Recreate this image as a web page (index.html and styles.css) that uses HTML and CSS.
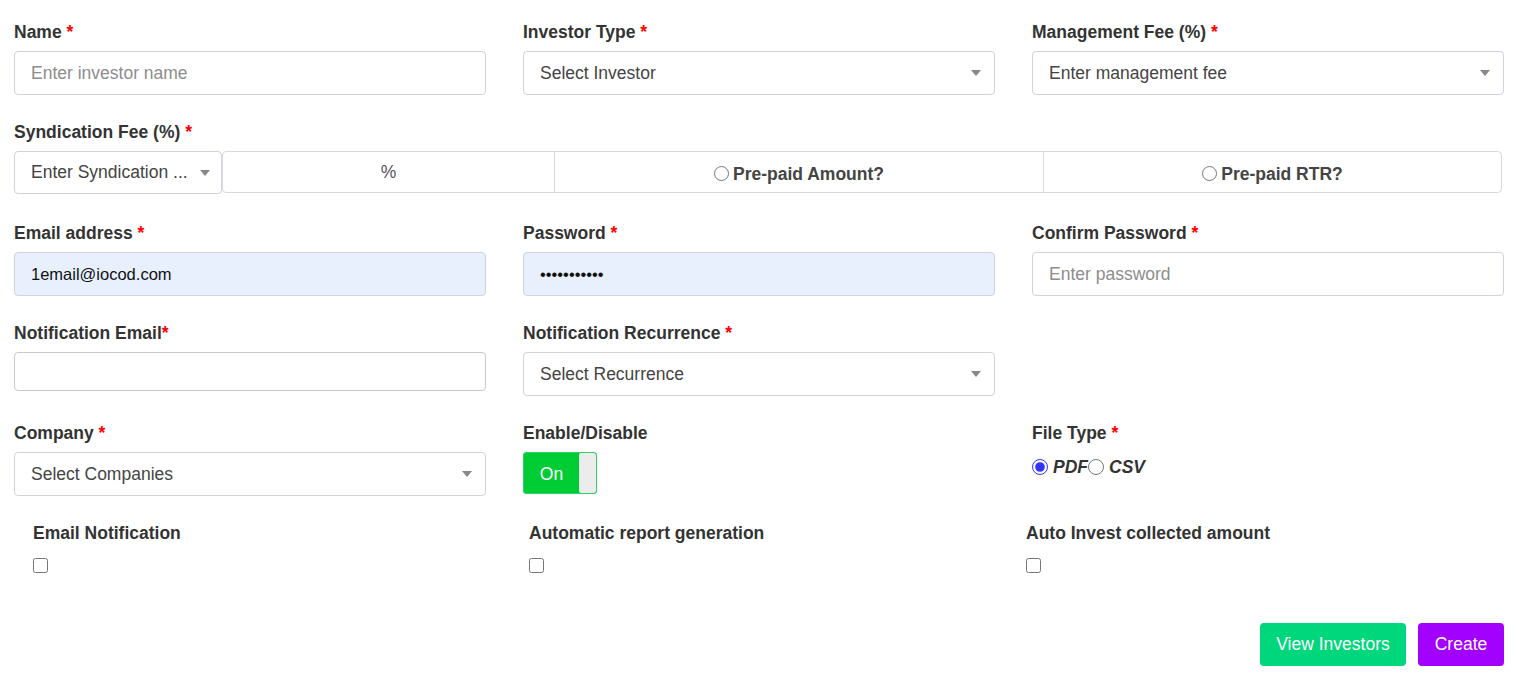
FILE: index.html
```html
<!DOCTYPE html>
<html lang="en">
<head>
<meta charset="utf-8">
<title>Create Investor</title>
<link rel="stylesheet" href="styles.css">
</head>
<body>
<form class="form">
  <div class="row3">
    <div class="field">
      <label class="lbl">Name <span class="req">*</span></label>
      <input class="inp" type="text" placeholder="Enter investor name">
    </div>
    <div class="field">
      <label class="lbl">Investor Type <span class="req">*</span></label>
      <div class="sel"><span>Select Investor</span><i class="caret"></i></div>
    </div>
    <div class="field">
      <label class="lbl">Management Fee (%) <span class="req">*</span></label>
      <div class="sel"><span>Enter management fee</span><i class="caret"></i></div>
    </div>
  </div>

  <div class="field synd-field">
    <label class="lbl">Syndication Fee (%) <span class="req">*</span></label>
    <div class="synd">
      <div class="sel sel-small"><span class="ell">Enter Syndication ...</span><i class="caret"></i></div>
      <div class="group">
        <div class="cell cell-pct">%</div>
        <div class="cell cell-amt"><input type="radio" class="rad"><span>Pre-paid Amount?</span></div>
        <div class="cell cell-rtr"><input type="radio" class="rad"><span>Pre-paid RTR?</span></div>
      </div>
    </div>
  </div>

  <div class="row3">
    <div class="field">
      <label class="lbl">Email address <span class="req">*</span></label>
      <input class="inp filled" type="text" value="1email@iocod.com">
    </div>
    <div class="field">
      <label class="lbl">Password <span class="req">*</span></label>
      <input class="inp filled pw" type="password" value="12345678901">
    </div>
    <div class="field">
      <label class="lbl">Confirm Password <span class="req">*</span></label>
      <input class="inp" type="password" placeholder="Enter password">
    </div>
  </div>

  <div class="row3">
    <div class="field">
      <label class="lbl">Notification Email<span class="req">*</span></label>
      <input class="inp inp-short" type="text">
    </div>
    <div class="field">
      <label class="lbl">Notification Recurrence <span class="req">*</span></label>
      <div class="sel"><span>Select Recurrence</span><i class="caret"></i></div>
    </div>
    <div></div>
  </div>

  <div class="row3">
    <div class="field">
      <label class="lbl">Company <span class="req">*</span></label>
      <div class="sel"><span>Select Companies</span><i class="caret"></i></div>
    </div>
    <div class="field">
      <label class="lbl">Enable/Disable</label>
      <div class="toggle"><span class="on">On</span><span class="knob"></span></div>
    </div>
    <div class="field">
      <label class="lbl">File Type <span class="req">*</span></label>
      <div class="ftype">
        <input type="radio" name="ft" class="rad2" checked><span class="it">PDF</span><input type="radio" name="ft" class="rad2"><span class="it">CSV</span>
      </div>
    </div>
  </div>

  <div class="checks">
    <div class="chk">
      <label class="lbl">Email Notification</label>
      <input type="checkbox" class="cb">
    </div>
    <div class="chk">
      <label class="lbl">Automatic report generation</label>
      <input type="checkbox" class="cb">
    </div>
    <div class="chk">
      <label class="lbl">Auto Invest collected amount</label>
      <input type="checkbox" class="cb">
    </div>
  </div>

  <div class="actions">
    <button type="button" class="btn btn-green">View Investors</button>
    <button type="button" class="btn btn-purple">Create</button>
  </div>
</form>
</body>
</html>
```

FILE: styles.css
```css
* { box-sizing: border-box; }
html, body { margin: 0; padding: 0; background: #fff; }
body { font-family: "Liberation Sans", Arial, sans-serif; color: #333; }

.form {
  width: 1519px;
  padding: 22px 15px 0 14px;
  display: flex;
  flex-direction: column;
  gap: 27px;
}

.row3 {
  display: grid;
  grid-template-columns: 472px 472px 472px;
  column-gap: 37px;
}

.field { display: flex; flex-direction: column; }
.synd-field { margin-bottom: 2px; }

.lbl {
  font-size: 17.5px;
  font-weight: bold;
  line-height: 20px;
  height: 20px;
  color: #333;
  margin-bottom: 9px;
  white-space: nowrap;
}
.req { color: #f00; }

.inp {
  height: 44px;
  border: 1px solid #cfd4dc;
  border-radius: 4px;
  padding: 0 16px;
  font-family: "Liberation Sans", Arial, sans-serif;
  font-size: 17.5px;
  color: #111;
  background: #fff;
  outline: none;
}
.inp::placeholder { color: #8d8d8d; }
.inp.filled { background: #e8f0fe; font-size: 16.5px; }
.inp-short { height: 39px; border-color: #c9c9c9; }

.sel {
  height: 44px;
  border: 1px solid #cfd4dc;
  border-radius: 4px;
  padding: 0 13px 0 16px;
  display: flex;
  align-items: center;
  justify-content: space-between;
  font-size: 17.5px;
  color: #444;
  background: #fff;
}
.caret {
  width: 0; height: 0;
  border-left: 5px solid transparent;
  border-right: 5px solid transparent;
  border-top: 6px solid #888;
  flex: none;
}

.synd { display: flex; align-items: flex-start; }
.sel-small { width: 208px; height: 43px; padding-right: 11px; }
.ell { white-space: nowrap; overflow: hidden; }
.group {
  flex: 1;
  margin-right: 2px;
  height: 42px;
  border: 1px solid #d6d9de;
  border-radius: 4px;
  display: flex;
}
.cell {
  display: flex;
  align-items: center;
  justify-content: center;
  height: 100%;
}
.cell + .cell { border-left: 1px solid #d6d9de; }
.cell-pct { width: 331px; font-size: 17.5px; color: #555; }
.cell-amt { width: 489px; }
.cell-rtr { flex: 1; }
.cell-amt span, .cell-rtr span {
  font-size: 17.5px;
  font-weight: bold;
  color: #444;
  padding-top: 5px;
}
.rad {
  width: 15px; height: 15px;
  margin: 2px 4px 0 0;
  accent-color: #3333ff;
}

.toggle {
  width: 74px;
  height: 42px;
  border: 1px solid #2ad46a;
  border-radius: 3px;
  background: #00cc33;
  display: flex;
  overflow: hidden;
}
.on {
  flex: 1;
  display: flex;
  align-items: center;
  justify-content: center;
  padding-top: 3px;
  color: #fff;
  font-size: 17.5px;
}
.knob {
  width: 17px;
  background: #ececec;
  border-radius: 2px;
}

.ftype {
  display: flex;
  align-items: center;
  height: 24px;
  margin-top: 3px;
}
.rad2 {
  width: 16px; height: 16px;
  margin: 0;
  accent-color: #3333ff;
}
.it {
  font-size: 17.5px;
  font-weight: bold;
  font-style: italic;
  color: #333;
  margin-left: 5px;
}

.checks {
  display: grid;
  grid-template-columns: 496px 497px 1fr;
  padding-left: 19px;
}
.chk { display: flex; flex-direction: column; align-items: flex-start; }
.chk .lbl { margin-bottom: 15px; }
.cb {
  width: 15px; height: 15px;
  margin: 0;
}

.actions {
  display: flex;
  justify-content: flex-end;
  gap: 12px;
  margin-top: 23px;
}
.btn {
  height: 43px;
  border: none;
  border-radius: 4px;
  color: #fff;
  font-family: "Liberation Sans", Arial, sans-serif;
  font-size: 17.5px;
  padding: 0 10px;
}
.btn-green { background: #00d67c; width: 146px; }
.btn-purple { background: #a200ff; width: 86px; }
```
